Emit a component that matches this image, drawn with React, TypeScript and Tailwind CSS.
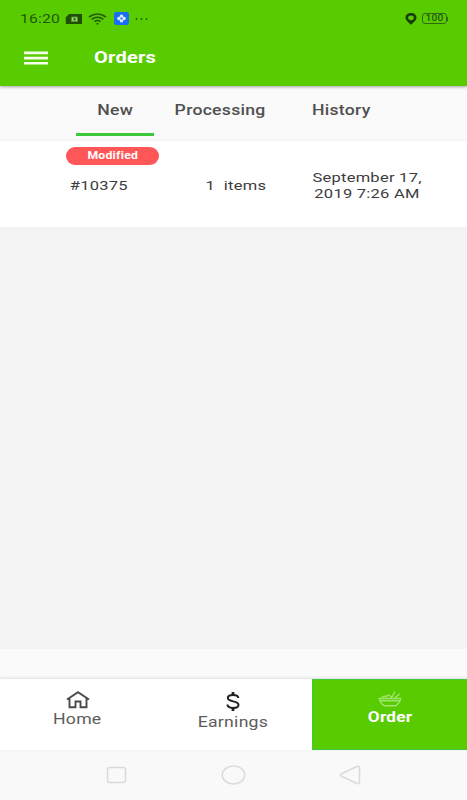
import { clsx } from "clsx";

function Label({ children, className }: any) {
  return (
    <span className={clsx("inline-block whitespace-pre", className)}>
      {children}
    </span>
  );
}

function StatusBar() {
  return (
    <div className="flex h-9 items-center pl-5 pr-[19px] pt-px text-[#23590a]">
      <Label className="w-[33px] origin-left scale-x-[1.2] text-[13px] leading-4">16:20</Label>
      <svg className="ml-3 h-3 w-[18px]" viewBox="0 0 18 12">
        <path d="M4 1h13v10H.8V4.500z" fill="#204e08" />
        <path d="M6.5 4h6v4.500h-6z" fill="#9bd77a" stroke="#4c9a20" />
        <path d="M8.500 5.300h2v2h-2z" fill="#204e08" />
      </svg>
      <svg className="ml-[5px] h-3 w-[19px]" viewBox="0 0 19 12" fill="none" stroke="#23590a" strokeWidth="1.6">
        <path d="M1 4Q9.5-2 18 4M3.7 6.4Q9.5 2 15.3 6.4M6.5 8.7Q9.5 6.4 12.5 8.7" />
        <circle cx="9.5" cy="10.7" r="1" fill="#23590a" stroke="none" />
      </svg>
      <svg className="ml-[7px] h-[13px] w-[15px]" viewBox="0 0 15 13">
        <rect width="15" height="13" rx="2" fill="#1a6ef5" />
        <g fill="#dceeff">
          <circle cx="7.500" cy="4.200" r="1.800" />
          <circle cx="7.500" cy="8.800" r="1.800" />
          <circle cx="5" cy="6.500" r="1.800" />
          <circle cx="10" cy="6.500" r="1.800" />
        </g>
        <circle cx="7.500" cy="6.500" r=".9" fill="#1a6ef5" />
      </svg>
      <svg className="ml-1.5 h-3 w-3.5" viewBox="0 0 14 12" fill="#23590a">
        <circle cx="1.500" cy="6" r=".9" />
        <circle cx="6.500" cy="6" r=".9" />
        <circle cx="11.500" cy="6" r=".9" />
      </svg>
      <svg className="ml-auto h-3 w-3" viewBox="0 0 12 12">
        <path fillRule="evenodd" d="M6 0C2.8 0 .5 2 .5 4.8.5 7.5 4 9.5 6 12c2-2.500 5.500-4.500 5.500-7.200C11.500 2 9.200 0 6 0zm0 2.400a2.800 2.400 0 1 1 0 4.800 2.800 2.400 0 0 1 0-4.800z" fill="#173d05" />
      </svg>
      <div className="ml-[5px] flex h-[11px] w-[25px] items-center justify-center rounded-[3px] border border-[#2f6a10]">
        <Label className="scale-x-[1.2] text-[8.500px] font-medium leading-none">100</Label>
      </div>
      <div className="h-1 w-px bg-[#2f6a10]" />
    </div>
  );
}

function Header() {
  return (
    <div className="relative h-[86px] bg-[#58cc00] shadow-[0_1px_3px_rgba(0,0,0,0.35)]">
      <StatusBar />
      <div className="flex h-[43px] items-center pl-6">
        <svg className="h-[14px] w-6" viewBox="0 0 24 14" fill="#f4ffec">
          <path d="M0 .500h24v2.700H0zM0 5.700h24v2.700H0zM0 10.900h24v2.700H0z" />
        </svg>
        <Label className="ml-[45.500px] origin-left scale-x-[1.25] text-[16px] font-bold text-white">Orders</Label>
      </div>
    </div>
  );
}

function Tabs() {
  return (
    <div className="flex h-[55px] border-b-2 border-[#f6f6f6] bg-[#fafafa] text-[14px] font-medium leading-[48px] text-[#505050]">
      <div className="ml-[76px] h-[50px] w-[78px] border-b-[3px] border-[#3cc93c] text-center">
        <Label className="scale-x-[1.26]">New</Label>
      </div>
      <div className="w-[132px] text-center">
        <Label className="scale-x-[1.26]">Processing</Label>
      </div>
      <div className="w-[110px] text-center">
        <Label className="scale-x-[1.26]">History</Label>
      </div>
    </div>
  );
}

function OrderRow() {
  return (
    <div className="h-[86px] bg-white pt-1.5 text-[13px] text-[#3c3c3c]">
      <div className="ml-[66px] h-[18px] w-[93px] rounded-full bg-[#ff5757] text-center text-[10px] font-bold leading-[17px] text-white">
        <Label className="scale-x-[1.22]">Modified</Label>
      </div>
      <div className="flex h-[41px] items-center text-center">
        <div className="ml-[60px] w-[78px]">
          <Label className="scale-x-[1.27]">#10375</Label>
        </div>
        <div className="ml-[58px] w-20">
          <Label className="scale-x-[1.27]">1  items</Label>
        </div>
        <div className="ml-[31px] w-[121px] leading-[15.500px]">
          <Label className="scale-x-[1.27]">{"September 17,\n2019 7:26 AM"}</Label>
        </div>
      </div>
    </div>
  );
}

function BottomNav() {
  return (
    <div className="relative flex h-[71px] bg-white text-center text-[14px] text-[#5c5c5c] shadow-[0_-1px_3px_rgba(0,0,0,0.12)]">
      <div className="flex w-[155px] flex-col items-center pt-3">
        <svg className="h-[18px] w-6" viewBox="0 0 24 18" fill="none" stroke="#4b4b4b" strokeWidth="1.9">
          <path d="M1 8.500L12 1.200l11 7.300M3.500 7.500V16.300H9.500V10.500H14.500V16.300H20.500V7.500" />
        </svg>
        <Label className="scale-x-[1.26] leading-[21px]">Home</Label>
      </div>
      <div className="flex w-[156.500px] flex-col items-center pt-[13px]">
        <svg className="h-[19px] w-[14px]" viewBox="0 0 14 19" fill="none" stroke="#222" strokeWidth="2">
          <path d="M12.300 6C12.300 3.800 10 2.900 7 2.900S1.800 4 1.800 6c0 4 10.700 2.700 10.700 6.700 0 2-2.500 3.200-5.500 3.200S1.500 14.700 1.500 12.500" />
          <path d="M7 0v3M7 16v3" strokeWidth="2.800" />
        </svg>
        <Label className="scale-x-[1.26] leading-[23px]">Earnings</Label>
      </div>
      <div className="flex flex-1 flex-col items-center border border-r-0 border-[#3cc93c] bg-[#58cc00] pt-[11px] text-white">
        <svg className="h-4 w-6" viewBox="0 0 24 16" fill="none" stroke="#a2e472" strokeWidth="1.400">
          <path d="M1.500 7.500h21c.5 2-2 5.500-5 7.300h-11c-3-1.800-5.500-5.300-5-7.300zM2 9.800h20M4 7.500c0-2 2-3 4-1.800 1.500-2.200 5-2 6 1.800M14 6l3-5.500M17 6.500l5-3.500" />
        </svg>
        <Label className="scale-x-[1.23] font-bold leading-5">Order</Label>
      </div>
    </div>
  );
}

function SystemNav() {
  return (
    <div className="flex h-[50px] items-center bg-[#f9f9f9] pl-[106px]">
      <svg className="h-[18px] w-[21px]" viewBox="0 0 21 18" fill="none" stroke="#dadada" strokeWidth="1.500">
        <rect x="1.500" y="1.500" width="18" height="15" rx="2" />
      </svg>
      <svg className="ml-[94px] h-5 w-[25px]" viewBox="0 0 25 20" fill="none" stroke="#dadada" strokeWidth="1.500">
        <ellipse cx="12.500" cy="10" rx="11.300" ry="9" />
      </svg>
      <svg className="ml-[93px] h-5 w-[22px]" viewBox="0 0 22 20" fill="none" stroke="#dadada" strokeWidth="1.500" strokeLinejoin="round">
        <path d="M2 9L18 1.500q2.500-.7 2.500 1.500v14q0 2.200-2.500 1.500L2 11q-1.500-1 0-2z" />
      </svg>
    </div>
  );
}

export default function App() {
  return (
    <div className="flex h-[800px] w-[467px] flex-col overflow-hidden bg-[#f4f4f4] font-['Roboto',sans-serif] tracking-[0.2px]">
      <Header />
      <Tabs />
      <OrderRow />
      <div className="flex-1" />
      <div className="h-[30px] bg-[#fafafa]" />
      <BottomNav />
      <SystemNav />
    </div>
  );
}
